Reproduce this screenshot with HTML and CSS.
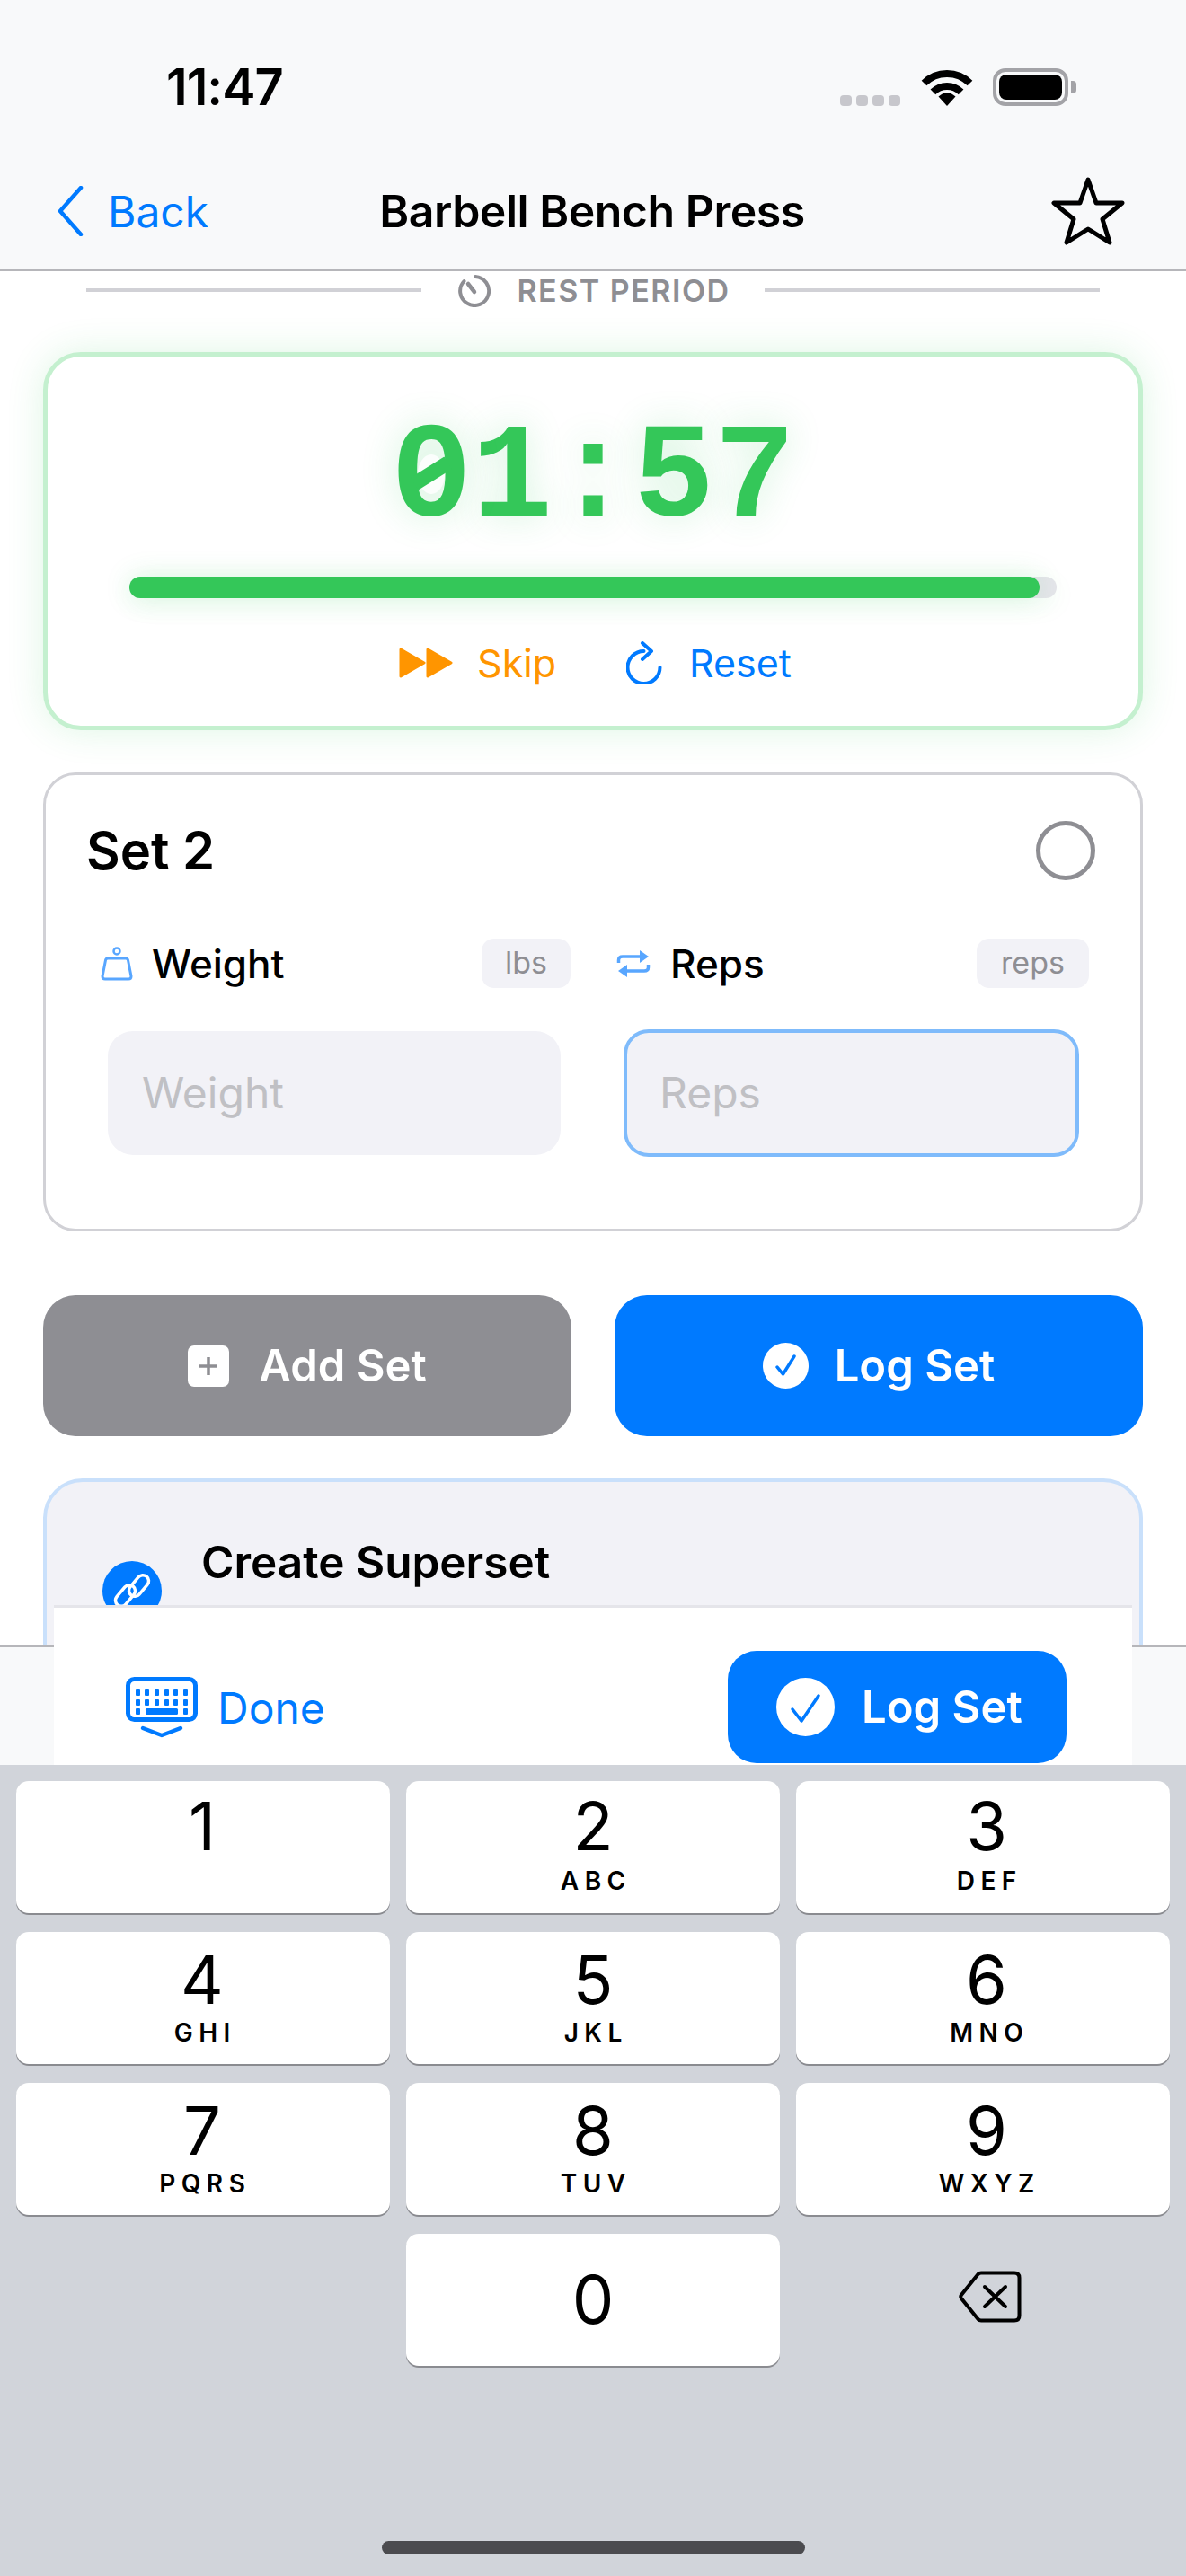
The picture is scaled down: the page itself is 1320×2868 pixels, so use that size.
FILE: index.html
```html
<!DOCTYPE html>
<html lang="en">
<head>
    <meta charset="UTF-8">
    <meta name="viewport" content="width=device-width, initial-scale=1.0">
    <title>Barbell Bench Press</title>
    <link rel="stylesheet" href="styles.css">
</head>
<body>
    <div class="screen">
        <header class="top-bar">
            <div class="status-row">
                <span class="clock">11:47</span>
                <div class="status-icons">
                    <div class="signal"><i></i><i></i><i></i><i></i></div>
                    <svg class="wifi" width="58" height="41" viewBox="0 0 58 41">
                        <path d="M3.5 15.5A36 36 0 0 1 54.5 15.5M13.4 25.4A22 22 0 0 1 44.6 25.4" fill="none" stroke="#000" stroke-width="8"/>
                        <path d="M29 41L19.500 30.500Q29 22 38.500 30.500Z" fill="#000"/>
                    </svg>
                    <div class="battery"><div class="battery-level"></div></div>
                    <div class="battery-nub"></div>
                </div>
            </div>
            <nav class="nav-row">
                <a class="back-link">
                    <svg width="30" height="56" viewBox="0 0 30 56"><path d="M27 2L4 28L27 54" fill="none" stroke="#007aff" stroke-width="4.500" stroke-linecap="round" stroke-linejoin="round"/></svg>
                    <span>Back</span>
                </a>
                <h1>Barbell Bench Press</h1>
                <svg class="star" width="82" height="78" viewBox="0 0 82 78">
                    <path d="M41 4L50 30L79 30L57 48L65 74L41 59L17 74L25 48L3 30L32 30Z" fill="none" stroke="#000" stroke-width="5" stroke-linejoin="round"/>
                </svg>
            </nav>
        </header>

        <main class="content">
            <div class="rest-title">
                <div class="rule"></div>
                <svg width="38" height="38" viewBox="0 0 38 38">
                    <path d="M20 4A16 16 0 1 1 7.500 9" fill="none" stroke="#8e8e93" stroke-width="4" stroke-linecap="round"/>
                    <path d="M19 21L12 12" fill="none" stroke="#8e8e93" stroke-width="4.500" stroke-linecap="round"/>
                </svg>
                <span>REST PERIOD</span>
                <div class="rule"></div>
            </div>

            <section class="timer-card">
                <div class="timer-value"><span class="zero">0</span>1:57</div>
                <div class="progress"><div class="progress-fill" style="width: 98.200%"></div></div>
                <div class="timer-actions">
                    <button class="link-btn skip">
                        <svg width="60" height="34" viewBox="0 0 60 34">
                            <path d="M2 2L28 17L2 32Z M32 2L58 17L32 32Z" fill="#ff9500" stroke="#ff9500" stroke-width="3" stroke-linejoin="round"/>
                        </svg>
                        Skip
                    </button>
                    <button class="link-btn reset">
                        <svg width="40" height="48" viewBox="0 0 40 48">
                            <path d="M37.500 29A18 18 0 1 1 19.500 11" fill="none" stroke="#007aff" stroke-width="4" stroke-linecap="round"/>
                            <path d="M18 2L28 11L18 20" fill="none" stroke="#007aff" stroke-width="4" stroke-linecap="round" stroke-linejoin="round"/>
                        </svg>
                        Reset
                    </button>
                </div>
            </section>

            <section class="set-card">
                <div class="set-header">
                    <h2>Set 2</h2>
                    <div class="set-check"></div>
                </div>
                <div class="set-fields">
                    <div class="field">
                        <div class="field-label">
                            <svg width="36" height="38" viewBox="0 0 36 38">
                                <circle cx="18" cy="5" r="3.500" fill="none" stroke="#58a6ff" stroke-width="2.500"/>
                                <path d="M8 13H28Q30 13 30.500 15L34 33Q34 36 31 36H5Q2 36 2 33L5.500 15Q6 13 8 13Z" fill="none" stroke="#58a6ff" stroke-width="3"/>
                            </svg>
                            <span class="label-text">Weight</span>
                            <span class="unit unit-lbs">lbs</span>
                        </div>
                        <div class="input-box">Weight</div>
                    </div>
                    <div class="field field-reps">
                        <div class="field-label">
                            <svg width="38" height="30" viewBox="0 0 38 30">
                                <path d="M2.500 14V11Q2.500 7 7 7H29" fill="none" stroke="#58a6ff" stroke-width="3.500"/>
                                <path d="M26 0L36 7L26 14Z" fill="#58a6ff"/>
                                <path d="M35.500 16V19Q35.500 23 31 23H9" fill="none" stroke="#58a6ff" stroke-width="3.500"/>
                                <path d="M12 16L2 23L12 30Z" fill="#58a6ff"/>
                            </svg>
                            <span class="label-text">Reps</span>
                            <span class="unit unit-reps">reps</span>
                        </div>
                        <div class="input-box input-focus">Reps</div>
                    </div>
                </div>
            </section>

            <div class="set-buttons">
                <button class="big-btn btn-gray">
                    <svg width="46" height="46" viewBox="0 0 46 46">
                        <rect width="46" height="46" rx="7" fill="#fff"/>
                        <path d="M23 13V33M13 23H33" stroke="#8e8e93" stroke-width="3.500"/>
                    </svg>
                    Add Set
                </button>
                <button class="big-btn btn-blue">
                    <svg width="51" height="51" viewBox="0 0 51 51">
                        <circle cx="25.500" cy="25.500" r="25.500" fill="#fff"/>
                        <path d="M16 27L22.500 35L35 15" fill="none" stroke="#007aff" stroke-width="3.500" stroke-linecap="round" stroke-linejoin="round"/>
                    </svg>
                    Log Set
                </button>
            </div>

            <section class="superset-card">
                <div class="superset-icon">
                    <svg width="66" height="66" viewBox="0 0 66 66">
                        <g fill="none" stroke="#fff" stroke-width="3.500">
                            <rect x="27" y="21" width="27" height="13" rx="6.500" transform="rotate(-50 40.500 27.500)"/>
                            <rect x="12" y="32" width="27" height="13" rx="6.500" transform="rotate(-50 25.500 38.500)"/>
                        </g>
                    </svg>
                </div>
                <h3>Create Superset</h3>
            </section>
        </main>

        <div class="bottom-bar">
            <div class="input-accessory">
                <button class="done-btn">
                    <svg width="80" height="68" viewBox="0 0 80 68">
                        <rect x="2.500" y="2.500" width="75" height="45" rx="7" fill="none" stroke="#007aff" stroke-width="5"/>
                        <g fill="#007aff">
                            <rect x="11" y="14" width="5" height="7" rx="1"/><rect x="21" y="14" width="5" height="7" rx="1"/><rect x="32" y="14" width="5" height="7" rx="1"/><rect x="43" y="14" width="5" height="7" rx="1"/><rect x="53" y="14" width="5" height="7" rx="1"/><rect x="64" y="14" width="5" height="7" rx="1"/>
                            <rect x="11" y="25" width="5" height="7" rx="1"/><rect x="21" y="25" width="5" height="7" rx="1"/><rect x="32" y="25" width="5" height="7" rx="1"/><rect x="43" y="25" width="5" height="7" rx="1"/><rect x="53" y="25" width="5" height="7" rx="1"/><rect x="64" y="25" width="5" height="7" rx="1"/>
                            <rect x="11" y="35" width="5" height="7" rx="1"/><rect x="22" y="35" width="36" height="7" rx="1.500"/><rect x="64" y="35" width="5" height="7" rx="1"/>
                        </g>
                        <path d="M19 57L40 65L61 57" fill="none" stroke="#007aff" stroke-width="4.500" stroke-linecap="round" stroke-linejoin="round"/>
                    </svg>
                    Done
                </button>
                <button class="log-btn">
                    <svg width="65" height="65" viewBox="0 0 65 65">
                        <circle cx="32.500" cy="32.500" r="32.500" fill="#fff"/>
                        <path d="M18 35L28 48L47 20" fill="none" stroke="#007aff" stroke-width="3.500" stroke-linecap="round" stroke-linejoin="round"/>
                    </svg>
                    Log Set
                </button>
            </div>
        </div>

        <div class="keyboard">
            <div class="keys">
                <div class="key"><span class="digit">1</span></div>
                <div class="key"><span class="digit">2</span><span class="letters">ABC</span></div>
                <div class="key"><span class="digit">3</span><span class="letters">DEF</span></div>
                <div class="key"><span class="digit">4</span><span class="letters">GHI</span></div>
                <div class="key"><span class="digit">5</span><span class="letters">JKL</span></div>
                <div class="key"><span class="digit">6</span><span class="letters">MNO</span></div>
                <div class="key"><span class="digit">7</span><span class="letters">PQRS</span></div>
                <div class="key"><span class="digit">8</span><span class="letters">TUV</span></div>
                <div class="key"><span class="digit">9</span><span class="letters">WXYZ</span></div>
                <div class="key-blank"></div>
                <div class="key key-zero"><span class="digit">0</span></div>
                <div class="key-blank key-delete">
                    <svg width="70" height="58" viewBox="0 0 70 58">
                        <path d="M25 2.500H62Q67.500 2.500 67.500 8V50Q67.500 55.500 62 55.500H25Q23 55.500 21.500 54L3 31Q1.500 29 3 27L21.500 4Q23 2.500 25 2.500Z" fill="none" stroke="#000" stroke-width="4"/>
                        <path d="M29 18L52 40M52 18L29 40" fill="none" stroke="#000" stroke-width="4" stroke-linecap="round"/>
                    </svg>
                </div>
            </div>
            <div class="home-bar"></div>
        </div>
    </div>
</body>
</html>
```

FILE: styles.css
```css
* {
    box-sizing: border-box;
}
body {
    margin: 0;
    font-family: Inter, "Noto Sans", sans-serif;
    background-color: #fff;
    color: #000;
}
h1, h2, h3 {
    margin: 0;
}
button {
    font-family: inherit;
    border: none;
    background: none;
    padding: 0;
}
.screen {
    width: 1320px;
    height: 2868px;
    display: flex;
    flex-direction: column;
    overflow: hidden;
}

/* status bar and navigation */
.top-bar {
    height: 302px;
    flex-shrink: 0;
    background-color: #f8f9fa;
    border-bottom: 2px solid #b6b6ba;
}
.status-row {
    height: 194px;
    display: flex;
    align-items: center;
    justify-content: space-between;
    padding: 0 122px 0 185px;
}
.clock {
    font-size: 56px;
    font-weight: 600;
    letter-spacing: -1px;
}
.status-icons {
    display: flex;
    align-items: flex-end;
    height: 42px;
}
.signal {
    display: flex;
    gap: 5px;
    margin-right: 23px;
}
.signal i {
    width: 13px;
    height: 12px;
    background-color: #c7c7cc;
    border-radius: 4px;
}
.wifi {
    margin-right: 22px;
}
.battery {
    width: 84px;
    height: 42px;
    padding: 3px;
    border: 4px solid #a3a3a7;
    border-radius: 14px;
}
.battery-level {
    height: 100%;
    background-color: #000;
    border-radius: 8px;
}
.battery-nub {
    width: 6px;
    height: 14px;
    margin: 0 0 14px 3px;
    background-color: #a3a3a7;
    border-radius: 0 4px 4px 0;
}
.nav-row {
    height: 82px;
    display: grid;
    grid-template-columns: 1fr auto 1fr;
    align-items: center;
    padding: 0 68px 0 63px;
}
.back-link {
    display: flex;
    align-items: center;
    gap: 27px;
    color: #007aff;
    font-size: 48px;
}
.nav-row h1 {
    margin-left: 3px;
    font-size: 50px;
    font-weight: 600;
    letter-spacing: -0.5px;
}
.star {
    justify-self: end;
}

/* scrolling part of the screen */
.content {
    flex: 0 0 1530px;
    overflow: hidden;
    padding: 2px 48px 0;
}
.rest-title {
    display: flex;
    align-items: center;
    height: 38px;
    padding: 0 48px;
    color: #8e8e93;
    font-size: 34px;
    font-weight: 600;
    letter-spacing: 1.5px;
}
.rule {
    flex: 1;
    height: 4px;
    background-color: #d1d1d6;
}
.rest-title svg {
    margin: 0 28px 0 40px;
}
.rest-title span {
    margin-right: 38px;
}

.timer-card {
    height: 421px;
    margin-top: 50px;
    padding: 0 46px;
    display: flex;
    flex-direction: column;
    align-items: center;
    background-color: #fff;
    border: 5px solid #c4f0cf;
    border-radius: 42px;
    box-shadow: 0 0 40px rgba(52, 199, 89, 0.16);
}
.timer-value {
    margin-top: 57px;
    height: 160px;
    line-height: 160px;
    font-family: "Liberation Mono", monospace;
    font-size: 150px;
    font-weight: 700;
    color: #34c759;
    text-shadow: 0 0 40px rgba(52, 199, 89, 0.22);
}
/* the timer's zero carries a slash, not a dot */
.zero {
    position: relative;
    display: inline-block;
}
.zero::before {
    content: "";
    position: absolute;
    left: 30px;
    top: 52px;
    width: 30px;
    height: 44px;
    background-color: #fbfefc;
    border-radius: 50%;
}
.zero::after {
    content: "";
    position: absolute;
    left: 23px;
    top: 65px;
    width: 44px;
    height: 16px;
    background-color: #34c759;
    transform: rotate(-32deg);
}
.progress {
    width: 1032px;
    height: 24px;
    margin-top: 28px;
    background-color: #e5e5ea;
    border-radius: 12px;
    box-shadow: 0 8px 30px rgba(52, 199, 89, 0.06);
}
.progress-fill {
    height: 100%;
    background-color: #34c759;
    border-radius: 12px;
    box-shadow: 0 0 30px rgba(52, 199, 89, 0.18);
}
.timer-actions {
    display: flex;
    gap: 78px;
    margin-top: 47px;
    margin-left: 5px;
}
.link-btn {
    display: flex;
    align-items: center;
    gap: 27px;
    font-size: 43px;
    height: 50px;
}
.skip {
    color: #ff9500;
}
.reset {
    color: #007aff;
    gap: 30px;
}

.set-card {
    height: 511px;
    margin-top: 47px;
    padding: 0 48px;
    border: 3px solid #d1d1d6;
    border-radius: 36px;
}
.set-header {
    display: flex;
    align-items: center;
    justify-content: space-between;
    height: 66px;
    margin-top: 51px;
    padding-right: 2px;
}
.set-header h2 {
    margin-left: -3px;
    font-size: 58px;
    font-weight: 600;
}
.set-check {
    width: 66px;
    height: 66px;
    border: 5px solid #8e8e93;
    border-radius: 50%;
}
.set-fields {
    display: grid;
    grid-template-columns: 536px 526px;
    gap: 51px;
    margin-top: 65px;
}
.field-label {
    display: flex;
    align-items: center;
    gap: 21px;
    height: 55px;
    padding-left: 13px;
}
.field-reps .field-label {
    padding-left: 0;
    gap: 22px;
    margin-left: 0;
}
.label-text {
    flex: 1;
    font-size: 44px;
    font-weight: 500;
}
.unit {
    height: 55px;
    line-height: 53px;
    text-align: center;
    font-size: 34px;
    color: #8e8e93;
    background-color: #f2f2f7;
    border-radius: 14px;
}
.unit-lbs {
    width: 99px;
}
.unit-reps {
    width: 125px;
}
.input-box {
    width: 504px;
    height: 138px;
    line-height: 138px;
    margin: 48px 0 0 21px;
    padding-left: 38px;
    font-size: 48px;
    color: #c0c0c4;
    background-color: #f2f2f7;
    border-radius: 28px;
}
.input-focus {
    width: 507px;
    height: 142px;
    line-height: 134px;
    margin: 46px 0 0 8px;
    padding-left: 36px;
    border: 4px solid #7fbbfb;
}

.set-buttons {
    display: grid;
    grid-template-columns: 588px 588px;
    gap: 48px;
    margin-top: 71px;
}
.big-btn {
    height: 157px;
    display: flex;
    align-items: center;
    justify-content: center;
    gap: 33px;
    color: #fff;
    font-size: 49px;
    font-weight: 600;
    border-radius: 36px;
}
.btn-gray {
    background-color: #8e8e93;
}
.btn-blue {
    background-color: #007aff;
    gap: 29px;
}

.superset-card {
    display: flex;
    height: 300px;
    margin-top: 47px;
    padding: 88px 0 0 62px;
    gap: 44px;
    background-color: #f2f2f7;
    border: 4px solid #c9e0fb;
    border-radius: 44px;
}
.superset-icon {
    width: 66px;
    height: 66px;
    border-radius: 50%;
    background-color: #007aff;
    flex-shrink: 0;
}
.superset-card h3 {
    margin-top: -29px;
    font-size: 49.500px;
    font-weight: 600;
    line-height: 60px;
}

/* bar above the keyboard */
.bottom-bar {
    position: relative;
    height: 133px;
    flex-shrink: 0;
    background-color: #f8f9fa;
    border-top: 2px solid #b6b6ba;
}
.input-accessory {
    position: absolute;
    left: 60px;
    right: 60px;
    top: -47px;
    height: 178px;
    display: flex;
    align-items: flex-start;
    justify-content: space-between;
    padding: 48px 73px 0 80px;
    background-color: #fff;
    border-top: 3px solid #e5e5ea;
}
.done-btn {
    display: flex;
    align-items: flex-start;
    gap: 22px;
    margin-top: 29px;
    color: #007aff;
    font-size: 48px;
    line-height: 70px;
}
.log-btn {
    display: flex;
    align-items: center;
    gap: 30px;
    width: 377px;
    height: 125px;
    padding-left: 54px;
    color: #fff;
    font-size: 49px;
    font-weight: 600;
    background-color: #007aff;
    border-radius: 32px;
}

/* numeric keyboard */
.keyboard {
    flex: 0 0 903px;
    position: relative;
    padding: 18px 18px 0;
    background-color: #d1d4da;
}
.keys {
    display: grid;
    grid-template-columns: repeat(3, 416px);
    grid-auto-rows: 147px;
    column-gap: 18px;
    row-gap: 21px;
}
.key {
    display: flex;
    flex-direction: column;
    align-items: center;
    padding-top: 13px;
    background-color: #fff;
    border-radius: 14px;
    box-shadow: 0 2px 0 #8a8b90;
}
.key:nth-child(3n) {
    padding-left: 8px;
}
.key:nth-child(3n + 1) {
    padding-right: 2px;
}
.key:nth-child(n + 4) .digit {
    margin-top: 3px;
}
.key:nth-child(n + 4) .letters {
    margin-top: 7px;
}
.key-zero {
    padding-top: 33px;
}
.key-zero .digit {
    margin-top: 0;
}
.digit {
    font-size: 74px;
    line-height: 74px;
}
.letters {
    margin-top: 9px;
    font-size: 28px;
    line-height: 30px;
    font-weight: 600;
    letter-spacing: 6.5px;
    margin-right: -6.5px;
}
.key-delete {
    display: flex;
    align-items: center;
    justify-content: center;
    padding: 0 0 8px 16px;
}
.home-bar {
    position: absolute;
    left: 425px;
    top: 864px;
    width: 471px;
    height: 15px;
    background-color: #4b4b4f;
    border-radius: 8px;
}
```
